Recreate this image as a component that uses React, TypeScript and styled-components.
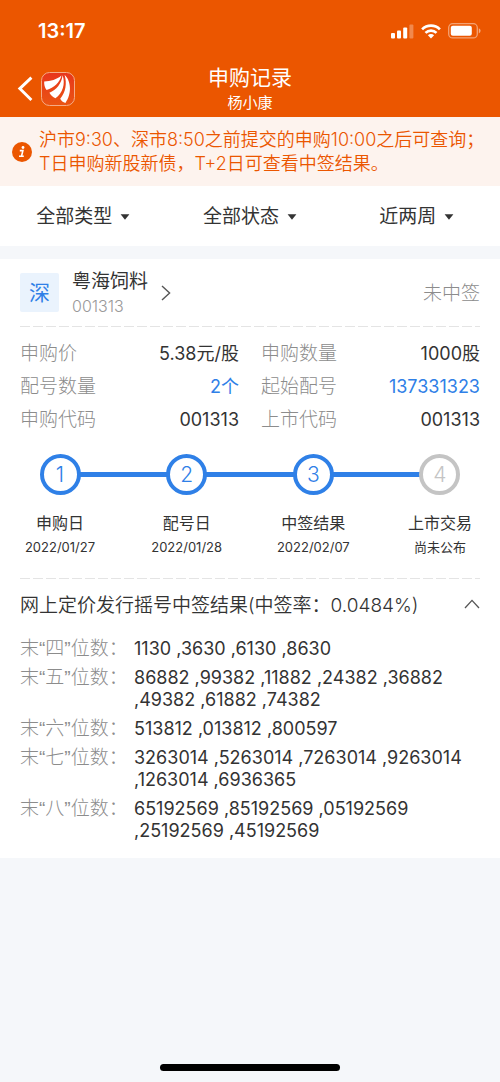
import React from "react";
import styled, { createGlobalStyle } from "styled-components";

const GlobalStyle = createGlobalStyle`
  * { box-sizing: border-box; }
  html, body, #root { height: 100%; }
  body {
    margin: 0;
    background: #f5f7fa;
    color: #333;
    font-family: Inter, "Noto Sans CJK SC", sans-serif;
    font-size: 18px;
    font-weight: 400;
    line-height: 24px;
  }
  button, select { font: inherit; color: inherit; }
  h1, h2, p, ol, dl, dd { margin: 0; padding: 0; font-weight: inherit; }
`;

const Page = styled.div`
  min-height: 100%;
  display: flex;
  flex-direction: column;
`;

const Header = styled.header`
  background: #eb5600;
  color: #fff;
`;

const StatusBar = styled.div`
  display: flex;
  align-items: center;
  justify-content: space-between;
  height: 60px;
  padding: 2px 19px 0 38px;
`;

const Clock = styled.span`
  font-size: 20px;
  font-weight: 600;
`;

const StatusIcons = styled.div`
  display: flex;
  align-items: center;
  gap: 7px;
`;

const NavBar = styled.div`
  display: grid;
  grid-template-columns: 1fr auto 1fr;
  align-items: center;
  height: 57px;
  padding: 0 17px;
`;

const NavLeft = styled.div`
  display: flex;
  align-items: center;
  gap: 8px;
`;

const IconButton = styled.button`
  display: flex;
  padding: 0;
  border: 0;
  background: none;
  cursor: pointer;
`;

const TitleGroup = styled.div`
  text-align: center;
`;

const Title = styled.h1`
  font-size: 21px;
  line-height: 28px;
`;

const Subtitle = styled.p`
  font-size: 15px;
  line-height: 22px;
`;

const Notice = styled.div`
  display: flex;
  align-items: center;
  gap: 7px;
  padding: 11px 12px 10px;
  background: #fdf3ee;
  color: #eb5600;
  font-weight: 350;

  svg { flex: none; }
`;

const Filters = styled.form`
  display: grid;
  grid-template-columns: repeat(3, 1fr);
  height: 60px;
  padding-top: 2px;
  background: #fff;
`;

const Filter = styled.label`
  display: flex;
  align-items: center;
  justify-content: center;
  gap: 8px;
`;

const FilterSelect = styled.select`
  appearance: none;
  field-sizing: content;
  padding: 0;
  border: 0;
  background: none;
  font-size: 19px;
`;

const Card = styled.article`
  margin-top: 13px;
  padding: 0 20px 16px;
  background: #fff;
`;

const StockRow = styled.div`
  display: flex;
  align-items: center;
  height: 67px;
`;

const Market = styled.span`
  display: grid;
  place-items: center;
  width: 39px;
  height: 39px;
  margin-right: 13px;
  border-radius: 2px;
  background: #eaf3fd;
  color: #2f80e7;
  font-size: 21px;
`;

const StockTitle = styled.div`
  padding-top: 3px;
`;

const StockName = styled.h2`
  font-size: 19px;
  line-height: 24px;
`;

const StockCode = styled.p`
  color: #999;
  font-size: 16px;
  font-weight: 300;
  line-height: 24px;
`;

const StockLink = styled(IconButton)`
  margin-left: 13px;
`;

const Outcome = styled.span`
  margin-left: auto;
  padding-top: 2px;
  color: #8c8c8c;
  font-size: 19px;
  font-weight: 300;
`;

const Divider = styled.hr`
  height: 1px;
  margin: 0;
  border: 0;
  background: repeating-linear-gradient(to right, #e4e4e4 0 10px, transparent 10px 13px);
`;

const Details = styled.dl`
  display: grid;
  grid-template-columns: 1fr 1fr;
  column-gap: 22px;
  padding: 10px 0 18px;
`;

const Detail = styled.div`
  display: flex;
  justify-content: space-between;
  line-height: 33px;

  dt {
    color: #8c8c8c;
    font-size: 19px;
    font-weight: 300;
  }
`;

const DetailValue = styled.dd<{ $accent?: boolean }>`
  color: ${(p) => (p.$accent ? "#2f80e7" : "#333")};
`;

const Steps = styled.ol`
  display: flex;
  justify-content: space-between;
  padding-bottom: 19px;
  list-style: none;
  background: linear-gradient(#2f80e7, #2f80e7) no-repeat 40px 18px / calc(100% - 80px) 5px;
`;

const Step = styled.li`
  display: flex;
  flex-direction: column;
  align-items: center;
  width: 80px;
  white-space: nowrap;
`;

const StepBadge = styled.span<{ $pending?: boolean }>`
  display: grid;
  place-items: center;
  width: 41px;
  height: 41px;
  margin-bottom: 16px;
  border: 4px solid ${(p) => (p.$pending ? "#c4c4c4" : "#2f80e7")};
  border-radius: 50%;
  background: #fff;
  color: ${(p) => (p.$pending ? "#c4c4c4" : "#2f80e7")};
  font-size: 21px;
  font-weight: 300;
`;

const StepName = styled.span`
  font-size: 16px;
  line-height: 24px;
`;

const StepDate = styled.span`
  font-size: 13px;
  line-height: 24px;
`;

const ResultHeader = styled.div`
  display: flex;
  align-items: center;
  justify-content: space-between;
  height: 54px;
`;

const ResultTitle = styled.h2`
  font-size: 19px;
  font-weight: 350;
  line-height: 24px;
  white-space: nowrap;
`;

const Results = styled.dl`
  display: grid;
  grid-template-columns: 114px 1fr;
  row-gap: 7px;
  padding-top: 5px;
  line-height: 22px;
`;

const ResultLabel = styled.dt`
  color: #8c8c8c;
  font-family: "Liberation Sans", "Noto Sans CJK SC", sans-serif;
  font-size: 19px;
  font-weight: 300;
  white-space: nowrap;
`;

const Num = styled.span`
  display: inline-block;
`;

const Footer = styled.footer`
  display: flex;
  justify-content: center;
  margin-top: auto;
  padding: 20px 0 11px;
`;

const HomeIndicator = styled.div`
  width: 36%;
  height: 7px;
  border-radius: 4px;
  background: #000;
`;

const SignalIcon = () => (
  <svg width="23" height="15" viewBox="0 0 23 15" fill="#fff" aria-hidden="true">
    <rect x="0" y="9" width="4" height="5.4" rx="1" />
    <rect x="6" y="6.5" width="4" height="7.9" rx="1" />
    <rect x="12.2" y="3.5" width="4" height="10.9" rx="1" />
    <rect x="18.4" y="0.4" width="4" height="14" rx="1" opacity="0.3" />
  </svg>
);

const WifiIcon = () => (
  <svg width="20" height="15" viewBox="0 0 20 15" fill="none" stroke="#fff" strokeWidth="2.7" aria-hidden="true">
    <path d="M1.1 5.4 A12.6 12.6 0 0 1 18.9 5.4" />
    <path d="M4.5 8.9 A7.8 7.8 0 0 1 15.5 8.9" />
    <path d="M6.9 11.3 A4.4 4.4 0 0 1 13.1 11.3 L10 14.4 Z" fill="#fff" stroke="none" />
  </svg>
);

const BatteryIcon = () => (
  <svg width="33" height="16" viewBox="0 0 33 16" aria-hidden="true">
    <rect x="0.7" y="0.7" width="28.6" height="14.2" rx="4" fill="none" stroke="#fff" strokeOpacity="0.45" strokeWidth="1.3" />
    <rect x="2.8" y="2.8" width="21" height="10" rx="2" fill="#fff" />
    <path d="M30.8 5.2 Q32.6 6 32.6 7.8 Q32.6 9.6 30.8 10.4 Z" fill="#fff" fillOpacity="0.5" />
  </svg>
);

const BackIcon = () => (
  <svg width="16" height="26" viewBox="0 0 16 26" fill="none" stroke="#fff" strokeWidth="2.9" aria-hidden="true">
    <path d="M14.4 1.6 L2.8 12.6 L14.4 24" />
  </svg>
);

const LogoIcon = () => (
  <svg width="34" height="34" viewBox="0 0 34 34" aria-hidden="true">
    <defs>
      <linearGradient id="logo-bg" x1="0" y1="0" x2="0" y2="1">
        <stop offset="0" stopColor="#e8361c" />
        <stop offset="1" stopColor="#ea5512" />
      </linearGradient>
    </defs>
    <rect x="0.5" y="0.5" width="33" height="33" rx="8" fill="url(#logo-bg)" stroke="#f5ab86" />
    <g fill="#fff">
      <path d="M3.2 9.4 C9.5 9.2 16 7.4 20.4 3.4 C19 10 13 15.8 5.6 18 C3.8 15.6 2.9 12.5 3.2 9.4 Z" />
      <path d="M21.6 3.2 C24.6 12 21.8 21 14.4 26.2 C11.8 25 9.8 23.2 8.4 20.8 C15.4 17.6 20.4 12 21.6 3.2 Z" />
      <path d="M23.6 3 C29.6 8 31.6 21 24.4 31 C22 30.4 20.4 28.8 19.2 26.8 C24.6 20.5 26.2 11.5 23.6 3 Z" />
    </g>
  </svg>
);

const InfoIcon = () => (
  <svg width="20" height="20" viewBox="0 0 20 20" aria-hidden="true">
    <circle cx="10" cy="10" r="10" fill="#eb5600" />
    <circle cx="11" cy="5.5" r="1.4" fill="#fff" />
    <path d="M7.8 8.6 H10.9 L9.5 14.3 M7 14.3 H11.8" fill="none" stroke="#fff" strokeWidth="1.6" />
  </svg>
);

const CaretIcon = () => (
  <svg width="10" height="6" viewBox="0 0 10 6" fill="#333" aria-hidden="true">
    <path d="M0.6 0.3 H9.4 L5 5.7 Z" />
  </svg>
);

const ChevronRight = () => (
  <svg width="10" height="16" viewBox="0 0 10 16" fill="none" stroke="#555" strokeWidth="1.4" aria-hidden="true">
    <path d="M1 1 L8.6 8 L1 15" />
  </svg>
);

const ChevronUp = () => (
  <svg width="16" height="14" viewBox="0 0 16 14" fill="none" stroke="#555" strokeWidth="1.3" aria-hidden="true">
    <path d="M1 9 L8 1.4 L15 9" />
  </svg>
);

const filters = [
  { label: "类型", value: "全部类型" },
  { label: "状态", value: "全部状态" },
  { label: "时间", value: "近两周" },
];

const details = [
  { name: "申购价", value: "5.38元/股" },
  { name: "申购数量", value: "1000股" },
  { name: "配号数量", value: "2个", accent: true },
  { name: "起始配号", value: "137331323", accent: true },
  { name: "申购代码", value: "001313" },
  { name: "上市代码", value: "001313" },
];

const steps = [
  { name: "申购日", date: "2022/01/27" },
  { name: "配号日", date: "2022/01/28" },
  { name: "中签结果", date: "2022/02/07" },
  { name: "上市交易", date: "尚未公布", pending: true },
];

const results = [
  { digits: "四", numbers: ["1130", "3630", "6130", "8630"] },
  { digits: "五", numbers: ["86882", "99382", "11882", "24382", "36882", "49382", "61882", "74382"] },
  { digits: "六", numbers: ["513812", "013812", "800597"] },
  { digits: "七", numbers: ["3263014", "5263014", "7263014", "9263014", "1263014", "6936365"] },
  { digits: "八", numbers: ["65192569", "85192569", "05192569", "25192569", "45192569"] },
];

export default function App() {
  return (
    <Page lang="zh-CN">
      <GlobalStyle />
      <Header>
        <StatusBar>
          <Clock>13:17</Clock>
          <StatusIcons>
            <SignalIcon />
            <WifiIcon />
            <BatteryIcon />
          </StatusIcons>
        </StatusBar>
        <NavBar>
          <NavLeft>
            <IconButton type="button" aria-label="返回"><BackIcon /></IconButton>
            <LogoIcon />
          </NavLeft>
          <TitleGroup>
            <Title>申购记录</Title>
            <Subtitle>杨小康</Subtitle>
          </TitleGroup>
        </NavBar>
      </Header>

      <Notice>
        <InfoIcon />
        <p>
          沪市9:30、深市8:50之前提交的申购10:00之后可查询；
          <br />
          T日申购新股新债，T+2日可查看中签结果。
        </p>
      </Notice>

      <Filters>
        {filters.map((f) => (
          <Filter key={f.label}>
            <FilterSelect aria-label={f.label}>
              <option>{f.value}</option>
            </FilterSelect>
            <CaretIcon />
          </Filter>
        ))}
      </Filters>

      <Card>
        <StockRow>
          <Market>深</Market>
          <StockTitle>
            <StockName>粤海饲料</StockName>
            <StockCode>001313</StockCode>
          </StockTitle>
          <StockLink type="button" aria-label="查看详情"><ChevronRight /></StockLink>
          <Outcome>未中签</Outcome>
        </StockRow>
        <Divider />
        <Details>
          {details.map((d) => (
            <Detail key={d.name}>
              <dt>{d.name}</dt>
              <DetailValue $accent={d.accent}>{d.value}</DetailValue>
            </Detail>
          ))}
        </Details>
        <Steps>
          {steps.map((s, i) => (
            <Step key={s.name}>
              <StepBadge $pending={s.pending}>{i + 1}</StepBadge>
              <StepName>{s.name}</StepName>
              <StepDate>{s.date}</StepDate>
            </Step>
          ))}
        </Steps>
        <Divider />
        <ResultHeader>
          <ResultTitle>网上定价发行摇号中签结果(中签率：0.0484%)</ResultTitle>
          <IconButton type="button" aria-label="收起"><ChevronUp /></IconButton>
        </ResultHeader>
        <Results>
          {results.map((r) => (
            <React.Fragment key={r.digits}>
              <ResultLabel>末“{r.digits}”位数：</ResultLabel>
              <dd>
                {r.numbers.map((n, i) => (
                  <React.Fragment key={n}>
                    <Num>{i > 0 ? "," + n : n}</Num>{" "}
                  </React.Fragment>
                ))}
              </dd>
            </React.Fragment>
          ))}
        </Results>
      </Card>

      <Footer>
        <HomeIndicator />
      </Footer>
    </Page>
  );
}
